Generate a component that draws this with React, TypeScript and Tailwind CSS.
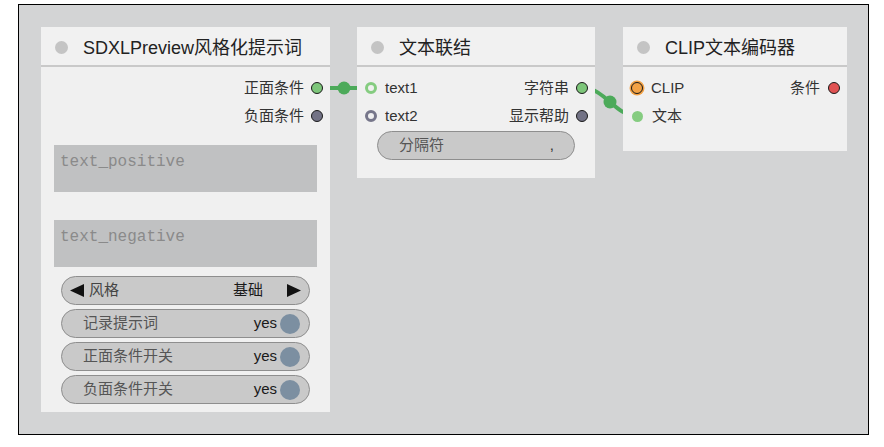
import React from 'react'

const sans = { fontFamily: '"Liberation Sans", "Noto Sans CJK SC", sans-serif' }
const mono = { fontFamily: '"Liberation Mono", monospace' }

function TitleBar({ title }: { title: string }) {
  return (
    <div className="flex items-center h-[40px] pt-[3px] bg-[#f1f1f1] border-b-2 border-[#c9c9c9]">
      <span className="ml-[14px] w-[13px] h-[13px] rounded-full bg-[#c4c4c4]" />
      <span className="ml-[15px] text-[18px] text-[#222] leading-none">{title}</span>
    </div>
  )
}

function Slot({ kind }: { kind: 'outGreen' | 'outGray' | 'outRed' | 'inGreen' | 'inGray' | 'inClip' | 'inText' }) {
  switch (kind) {
    case 'outGreen':
      return <span className="w-[12px] h-[12px] rounded-full bg-[#7dc67a] border-[1.5px] border-[#1a1a1a]" />
    case 'outGray':
      return <span className="w-[12px] h-[12px] rounded-full bg-[#727285] border-[1.5px] border-[#1a1a1a]" />
    case 'outRed':
      return <span className="w-[12px] h-[12px] rounded-full bg-[#e05252] border-[1.5px] border-[#1a1a1a]" />
    case 'inGreen':
      return <span className="w-[12px] h-[12px] rounded-full bg-[#f0f0f0] border-[3px] border-[#85cc80]" />
    case 'inGray':
      return <span className="w-[12px] h-[12px] rounded-full bg-[#f0f0f0] border-[3px] border-[#76768a]" />
    case 'inClip':
      return <span className="w-[12px] h-[12px] rounded-full bg-[#f3a245] border-[1.5px] border-[#1a1a1a] shadow-[0_0_0_1.5px_#f3a245]" />
    case 'inText':
      return <span className="w-[11px] h-[11px] rounded-full bg-[#85cc80]" />
  }
}

function Toggle({ label }: { label: string }) {
  return (
    <div className="flex items-center h-[29px] mx-[20px] rounded-full border-[1.5px] border-[#8e8e8e] bg-[#c9c9c9] pl-[21px] pr-[9px]">
      <span className="text-[15px] text-[#555]">{label}</span>
      <span className="ml-auto text-[15px] text-[#1a1a1a]">yes</span>
      <span className="ml-[3px] w-[20px] h-[20px] rounded-full bg-[#7c8fa1]" />
    </div>
  )
}

export default function App() {
  return (
    <div className="w-[884px] h-[447px] bg-white pt-[4px] pl-[18px]" style={sans}>
      <div className="relative w-[851px] h-[431px] border border-black bg-[#d3d4d5] overflow-hidden">
        {/* links */}
        <svg className="absolute inset-0" width="849" height="429">
          <line x1="298" y1="83" x2="352" y2="83" stroke="#4caa5a" strokeWidth="4" />
          <circle cx="325" cy="83" r="6.5" fill="#4caa5a" />
          <path d="M564 83 C 586 83 596 111 618 111" fill="none" stroke="#4caa5a" strokeWidth="4" />
          <circle cx="591" cy="97" r="6.5" fill="#4caa5a" />
        </svg>

        {/* SDXL node */}
        <div className="absolute left-[22px] top-[22px] w-[289px] h-[385px] bg-[#f0f0f0]">
          <TitleBar title="SDXLPreview风格化提示词" />
          <div className="pt-[7px]">
            <div className="flex items-center justify-end h-[28px] pr-[7px] gap-[7px]">
              <span className="text-[15px] text-[#333]">正面条件</span>
              <Slot kind="outGreen" />
            </div>
            <div className="flex items-center justify-end h-[28px] pr-[7px] gap-[7px]">
              <span className="text-[15px] text-[#333]">负面条件</span>
              <Slot kind="outGray" />
            </div>
            <div className="mt-[15px] mx-[13px] h-[47px] bg-[#c0c1c2] px-[6px] pt-[5px] text-[16px] text-[#8a8a8a]" style={mono}>
              text_positive
            </div>
            <div className="mt-[28px] mx-[13px] h-[47px] bg-[#c0c1c2] px-[6px] pt-[5px] text-[16px] text-[#8a8a8a]" style={mono}>
              text_negative
            </div>
            <div className="mt-[9px] flex flex-col gap-[4px]">
              <div className="flex items-center h-[29px] mx-[20px] rounded-full border-[1.5px] border-[#8e8e8e] bg-[#c9c9c9] pl-[8px] pr-[8px]">
                <svg width="14" height="13" viewBox="0 0 14 13"><polygon points="0,6.5 14,0 14,13" fill="#111" /></svg>
                <span className="ml-[5px] text-[15px] text-[#444]">风格</span>
                <span className="ml-auto text-[15px] text-[#1a1a1a]">基础</span>
                <svg className="ml-[24px]" width="14" height="13" viewBox="0 0 14 13"><polygon points="14,6.5 0,0 0,13" fill="#111" /></svg>
              </div>
              <Toggle label="记录提示词" />
              <Toggle label="正面条件开关" />
              <Toggle label="负面条件开关" />
            </div>
          </div>
        </div>

        {/* concat node */}
        <div className="absolute left-[338px] top-[22px] w-[238px] h-[151px] bg-[#f0f0f0]">
          <TitleBar title="文本联结" />
          <div className="pt-[7px]">
            <div className="flex items-center h-[28px] pl-[8px] pr-[7px]">
              <Slot kind="inGreen" />
              <span className="ml-[8px] text-[15px] text-[#333]">text1</span>
              <span className="ml-auto text-[15px] text-[#333]">字符串</span>
              <span className="ml-[7px] flex"><Slot kind="outGreen" /></span>
            </div>
            <div className="flex items-center h-[28px] pl-[8px] pr-[7px]">
              <Slot kind="inGray" />
              <span className="ml-[8px] text-[15px] text-[#333]">text2</span>
              <span className="ml-auto text-[15px] text-[#333]">显示帮助</span>
              <span className="ml-[7px] flex"><Slot kind="outGray" /></span>
            </div>
            <div className="flex items-center h-[29px] mx-[20px] mt-[1px] rounded-full border-[1.5px] border-[#8e8e8e] bg-[#c9c9c9] pl-[21px] pr-[20px]">
              <span className="text-[15px] text-[#555]">分隔符</span>
              <span className="ml-auto text-[15px] text-[#333]">,</span>
            </div>
          </div>
        </div>

        {/* CLIP node */}
        <div className="absolute left-[604px] top-[22px] w-[224px] h-[124px] bg-[#f0f0f0]">
          <TitleBar title="CLIP文本编码器" />
          <div className="pt-[7px]">
            <div className="flex items-center h-[28px] pl-[8px] pr-[7px]">
              <Slot kind="inClip" />
              <span className="ml-[8px] text-[15px] text-[#333]">CLIP</span>
              <span className="ml-auto text-[15px] text-[#333]">条件</span>
              <span className="ml-[8px] flex"><Slot kind="outRed" /></span>
            </div>
            <div className="flex items-center h-[28px] pl-[9px] pr-[8px]">
              <Slot kind="inText" />
              <span className="ml-[9px] text-[15px] text-[#333]">文本</span>
            </div>
          </div>
        </div>
      </div>
    </div>
  )
}
